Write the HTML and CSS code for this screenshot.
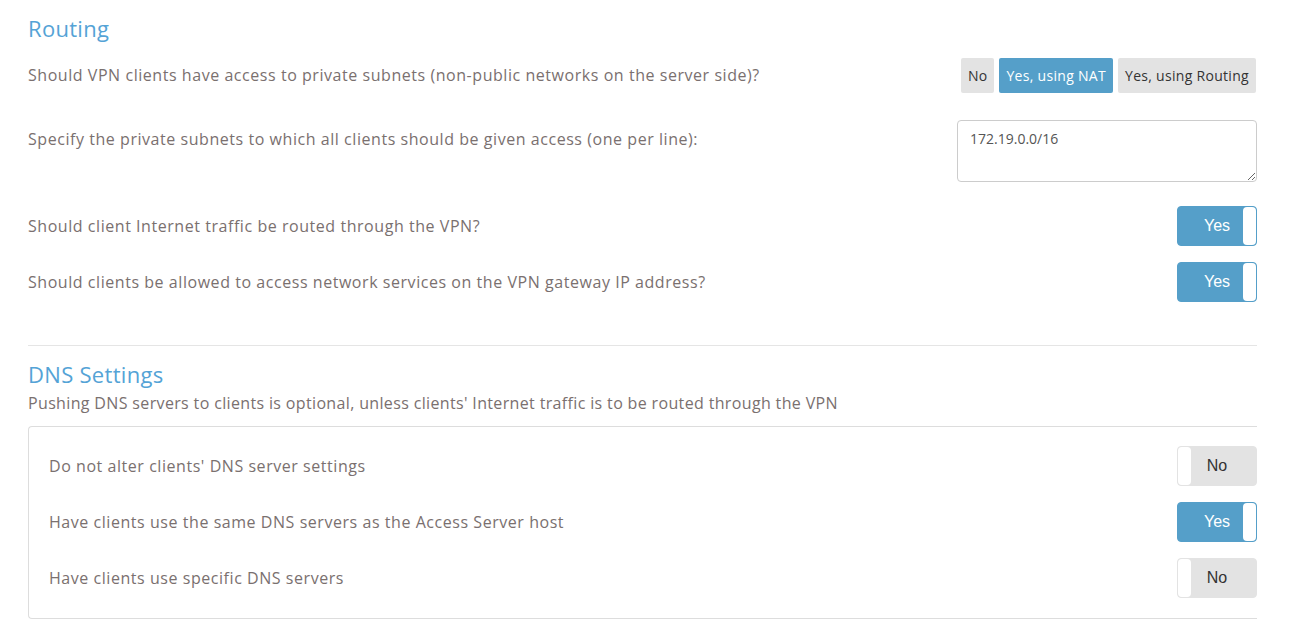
FILE: index.html
```html
<!DOCTYPE html>
<html>
<head>
<meta charset="utf-8">
<link rel="stylesheet" href="styles.css">
</head>
<body>
<div class="page">
  <section class="section">
    <h2 class="heading">Routing</h2>
    <div class="row row-first">
      <div class="label">Should VPN clients have access to private subnets (non-public networks on the server side)?</div>
      <div class="btn-group">
        <span class="seg">No</span>
        <span class="seg seg-active">Yes, using NAT</span>
        <span class="seg">Yes, using Routing</span>
      </div>
    </div>
    <div class="row row-textarea">
      <div class="label">Specify the private subnets to which all clients should be given access (one per line):</div>
      <textarea class="subnets">172.19.0.0/16</textarea>
    </div>
    <div class="row row-toggle">
      <div class="label">Should client Internet traffic be routed through the VPN?</div>
      <div class="toggle on"><span class="toggle-text">Yes</span><span class="knob"></span></div>
    </div>
    <div class="row row-toggle">
      <div class="label">Should clients be allowed to access network services on the VPN gateway IP address?</div>
      <div class="toggle on"><span class="toggle-text">Yes</span><span class="knob"></span></div>
    </div>
  </section>
  <hr class="divider">
  <section class="section">
    <h2 class="heading dns-heading">DNS Settings</h2>
    <p class="subtitle">Pushing DNS servers to clients is optional, unless clients' Internet traffic is to be routed through the VPN</p>
    <div class="panel">
      <div class="row row-toggle panel-row">
        <div class="label">Do not alter clients' DNS server settings</div>
        <div class="toggle off"><span class="knob"></span><span class="toggle-text">No</span></div>
      </div>
      <div class="row row-toggle panel-row">
        <div class="label">Have clients use the same DNS servers as the Access Server host</div>
        <div class="toggle on"><span class="toggle-text">Yes</span><span class="knob"></span></div>
      </div>
      <div class="row row-toggle panel-row">
        <div class="label">Have clients use specific DNS servers</div>
        <div class="toggle off"><span class="knob"></span><span class="toggle-text">No</span></div>
      </div>
    </div>
  </section>
</div>
</body>
</html>
```
FILE: styles.css
```css
* { box-sizing: border-box; }
html, body { margin: 0; padding: 0; background: #fff; }
body {
  font-family: "Open Sans", "Liberation Sans", sans-serif;
  font-size: 16px;
  color: #7a706f;
}
.page {
  width: 1257px;
  padding-left: 28px;
  padding-top: 12px;
}
.heading {
  margin: 0;
  font-weight: 400;
  font-size: 22px;
  line-height: 32px;
  color: #54a3d6;
  letter-spacing: 0.3px;
}
.row {
  display: flex;
  align-items: center;
  justify-content: space-between;
}
.row-first { margin-top: 13px; height: 36px; }
.row-first .btn-group { margin-top: 1px; }
.row-textarea { margin-top: 27px; height: 62px; align-items: flex-start; }
.row-textarea .label { margin-top: 8px; }
.row-toggle { height: 40px; margin-top: 16px; position: relative; }
.row-textarea + .row-toggle { margin-top: 24px; }
.label { letter-spacing: 0.55px; }
.btn-group { display: flex; gap: 5px; margin-right: 1px; }
.seg {
  background: #e3e3e3;
  color: #333;
  font-size: 14px;
  letter-spacing: 0.3px;
  padding: 0 7px;
  height: 35px;
  line-height: 35px;
  border-radius: 2px;
}
.seg-active { background: #559fc9; color: #fff; }
.subnets {
  width: 300px;
  height: 62px;
  border: 1px solid #ccc;
  border-radius: 4px;
  padding: 8px 12px;
  font-family: inherit;
  font-size: 14px;
  color: #555;
  resize: vertical;
}
.toggle {
  position: relative;
  width: 80px;
  height: 40px;
  border-radius: 4px;
  display: flex;
  align-items: center;
  justify-content: center;
  font-family: "Liberation Sans", Arial, sans-serif;
  font-size: 16px;
}
.toggle.on { background: #559fc9; border: 1px solid #559fc9; color: #fff; }
.toggle.off { background: #e3e3e3; border: 1px solid #e3e3e3; color: #333; }
.toggle-text { padding-bottom: 1px; }
.knob {
  position: absolute;
  top: 0;
  bottom: 0;
  width: 13px;
  background: #fff;
  border-radius: 4px;
}
.toggle.on .knob { right: 0; }
.toggle.off .knob { left: 0; }
.divider {
  border: 0;
  border-top: 1px solid #e5e5e5;
  margin: 43px 0 12px;
}
.subtitle { margin: 2px 0 0; letter-spacing: 0.35px; }
.panel {
  margin-top: 12px;
  border: 1px solid #ddd;
  border-right: 0;
  border-radius: 4px 0 0 4px;
  padding: 3px 0 20px 20px;
}
.panel-row { margin-top: 16px; }
```
